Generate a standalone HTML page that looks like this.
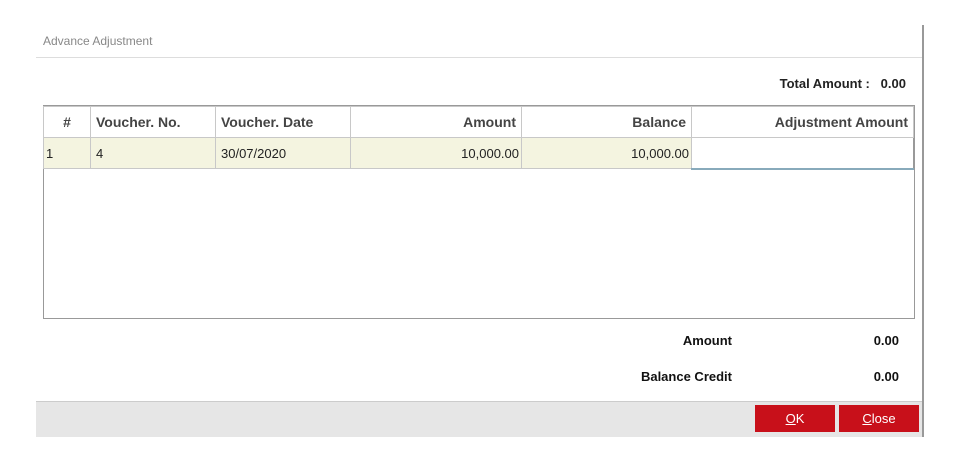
<html><head><style>
body{margin:0;width:961px;height:462px;background:#fff;position:relative;font-family:"Liberation Sans",sans-serif;overflow:hidden}
.a{position:absolute}
table{border-collapse:collapse;font-size:14px}
td,th{padding:0 5px;height:31px;border:1px solid #c8c8c8}
th{color:#444;font-weight:bold}
</style></head><body>
<div class="a" style="left:922px;top:25px;width:2px;height:412px;background:#999"></div>
<div class="a" style="left:43px;top:34px;font-size:12px;color:#888">Advance Adjustment</div>
<div class="a" style="left:36px;top:57px;width:886px;height:1px;background:#ddd"></div>
<div class="a" style="right:55px;top:76px;font-size:13px;font-weight:bold;color:#222">Total Amount :&nbsp;&nbsp; 0.00</div>
<div class="a" style="left:43px;top:105px;width:870px;height:211px;border:1px solid #999;border-top:2px solid #999">
<table style="width:871px;margin:-1px 0 0 -1px">
<tr><th style="width:36px;text-align:center">#</th><th style="width:114px;text-align:left">Voucher. No.</th><th style="width:124px;text-align:left">Voucher. Date</th><th style="width:160px;text-align:right">Amount</th><th style="width:159px;text-align:right">Balance</th><th style="text-align:right">Adjustment Amount</th></tr>
<tr style="background:#f4f4e0;font-size:13px;color:#222"><td style="padding-left:2px">1</td><td>4</td><td>30/07/2020</td><td style="text-align:right;padding-right:2px">10,000.00</td><td style="text-align:right;padding-right:2px">10,000.00</td><td style="background:#fff;border:1px solid #999;border-bottom:2px solid #8ab"></td></tr>
</table></div>
<div class="a" style="right:229px;top:333px;font-size:13px;font-weight:bold;color:#111">Amount</div>
<div class="a" style="right:62px;top:333px;font-size:13px;font-weight:bold;color:#111">0.00</div>
<div class="a" style="right:229px;top:369px;font-size:13px;font-weight:bold;color:#111">Balance Credit</div>
<div class="a" style="right:62px;top:369px;font-size:13px;font-weight:bold;color:#111">0.00</div>
<div class="a" style="left:36px;top:401px;width:886px;height:35px;background:#e6e6e6;border-top:1px solid #ccc"></div>
<div class="a" style="left:755px;top:405px;width:80px;height:27px;background:#c8101a;color:#fff;font-size:13px;text-align:center;line-height:27px"><u>O</u>K</div>
<div class="a" style="left:839px;top:405px;width:80px;height:27px;background:#c8101a;color:#fff;font-size:13px;text-align:center;line-height:27px"><u>C</u>lose</div>
</body></html>
